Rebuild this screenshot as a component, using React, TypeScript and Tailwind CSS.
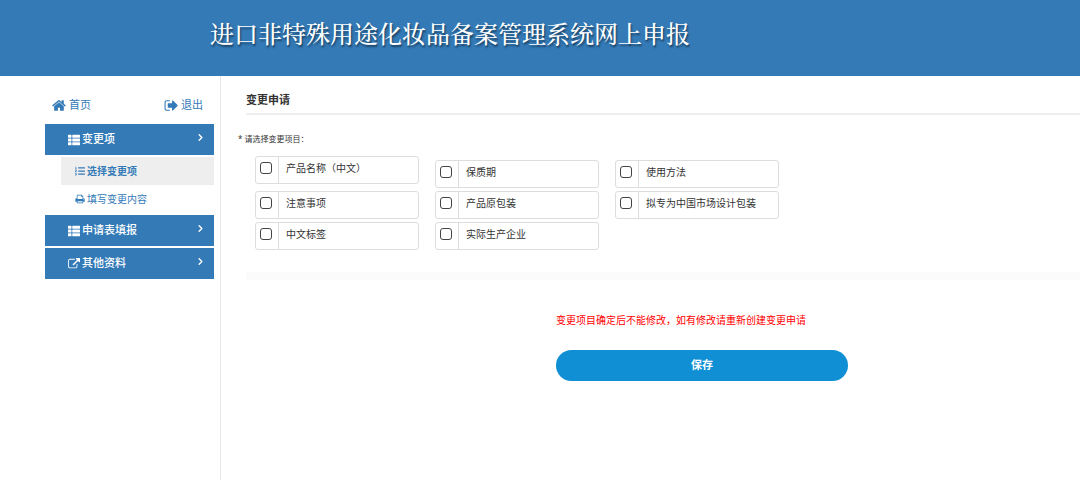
import { useState } from 'react'
import { ChevronRight } from 'lucide-react'
import { FaListOl, FaThList } from 'react-icons/fa'

const items = [
  '产品名称（中文）',
  '保质期',
  '使用方法',
  '注意事项',
  '产品原包装',
  '拟专为中国市场设计包装',
  '中文标签',
  '实际生产企业',
]

// Font Awesome 4 outlines, which differ from the v5 set in react-icons.
const paths = {
  home: 'M1408 992v480q0 26-19 45t-45 19h-384v-384h-256v384h-384q-26 0-45-19t-19-45v-480q0-1 .5-3t.5-3l575-474 575 474q1 2 1 6zm223-69l-62 74q-8 9-21 11h-3q-13 0-21-7l-692-577-692 577q-12 8-24 7-13-2-21-11l-62-74q-8-10-7-23.5t11-21.5l719-599q32-26 76-26t76 26l244 204v-195q0-14 9-23t23-9h192q14 0 23 9t9 23v408l219 182q10 8 11 21.5t-7 23.5z',
  signOut:
    'M704 1440q0 4 1 20t.5 26.5-3 23.5-10 19.5-20.5 6.5h-320q-119 0-203.5-84.5t-84.5-203.5v-704q0-119 84.5-203.5t203.5-84.5h320q13 0 22.5 9.5t9.5 22.5q0 4 1 20t.5 26.5-3 23.5-10 19.5-20.5 6.5h-320q-66 0-113 47t-47 113v704q0 66 47 113t113 47h312l11.5 1 11.5 3 8 5.5 7 9 2 13.5zm928-544q0 26-19 45l-544 544q-19 19-45 19t-45-19-19-45v-288h-448q-26 0-45-19t-19-45v-384q0-26 19-45t45-19h448v-288q0-26 19-45t45-19 45 19l544 544q19 19 19 45z',
  print:
    'M448 1536h896v-256h-896v256zm0-640h896v-384h-160q-40 0-68-28t-28-68v-160h-640v640zm1152 64q0-26-19-45t-45-19-45 19-19 45 19 45 45 19 45-19 19-45zm128 0v416q0 13-9.5 22.5t-22.5 9.5h-224v160q0 40-28 68t-68 28h-960q-40 0-68-28t-28-68v-160h-224q-13 0-22.5-9.5t-9.5-22.5v-416q0-79 56.5-135.5t135.5-56.5h64v-544q0-40 28-68t68-28h672q40 0 88 20t76 48l152 152q28 28 48 76t20 88v256h64q79 0 135.5 56.5t56.5 135.5z',
  external:
    'M1408 928v320q0 119-84.5 203.5t-203.5 84.5h-832q-119 0-203.5-84.5t-84.5-203.5v-832q0-119 84.5-203.5t203.5-84.5h704q14 0 23 9t9 23v64q0 14-9 23t-23 9h-704q-66 0-113 47t-47 113v832q0 66 47 113t113 47h832q66 0 113-47t47-113v-320q0-14 9-23t23-9h64q14 0 23 9t9 23zm384-864v512q0 26-19 45t-45 19-45-19l-176-176-652 652q-10 10-23 10t-23-10l-114-114q-10-10-10-23t10-23l652-652-176-176q-19-19-19-45t19-45 45-19h512q26 0 45 19t19 45z',
}

function Icon({ name, size }: { name: keyof typeof paths; size: number }) {
  return (
    <svg width={size} height={size} viewBox="0 0 1792 1792" fill="currentColor" aria-hidden="true">
      <path d={paths[name]} />
    </svg>
  )
}

function MenuHeading({ icon, text }: { icon: React.ReactNode; text: string }) {
  return (
    <button
      type="button"
      className="flex h-[31px] w-full items-center gap-[2px] bg-[#337ab7] pr-2 pl-[23px] text-[11px] font-medium text-white"
    >
      {icon}
      <span>{text}</span>
      <ChevronRight size={11} strokeWidth={3} className="mb-1 ml-auto" />
    </button>
  )
}

function Sidebar() {
  return (
    <aside className="w-[221px] shrink-0 border-r border-[#e8e8e8] pt-5 pr-[6px] pl-[45px]">
      <div className="flex h-[18px] items-center justify-between pr-[11px] pl-[7px] text-[11px] text-[#337ab7]">
        <a href="#home" className="flex items-center gap-[2px]">
          <Icon name="home" size={15} />
          首页
        </a>
        <a href="#logout" className="flex items-center gap-[2px]">
          <Icon name="signOut" size={15} />
          退出
        </a>
      </div>

      <nav className="mt-[10px] flex flex-col gap-[2px]">
        <MenuHeading icon={<FaThList size={12} />} text="变更项" />
        <div className="pl-4 text-[10px] text-[#337ab7]">
          <a href="#select" className="flex h-7 items-center gap-[2px] bg-[#eee] pl-[14px] font-bold">
            <FaListOl size={10} />
            选择变更项
          </a>
          <a href="#content" className="flex h-7 items-center gap-[2px] pl-[14px]">
            <Icon name="print" size={10} />
            填写变更内容
          </a>
        </div>
        <MenuHeading icon={<FaThList size={12} />} text="申请表填报" />
        <MenuHeading icon={<Icon name="external" size={12} />} text="其他资料" />
      </nav>
    </aside>
  )
}

export default function App() {
  const [checked, setChecked] = useState<string[]>([])

  const toggle = (name: string) =>
    setChecked(prev => (prev.includes(name) ? prev.filter(n => n !== name) : [...prev, name]))

  return (
    <div className="flex min-h-screen flex-col bg-white font-['Noto_Sans','Noto_Sans_CJK_SC',sans-serif] text-[#333]">
      <header className="h-[76px] bg-[#337ab7] pt-[15px] pl-[210px]">
        <h1 className="font-['Noto_Serif_CJK_SC','Noto_Sans_CJK_SC',serif] text-[24px] leading-9 font-medium text-white [text-shadow:1px_2px_2px_rgba(0,0,0,0.5)]">
          进口非特殊用途化妆品备案管理系统网上申报
        </h1>
      </header>

      <div className="flex flex-1">
        <Sidebar />

        <main className="min-w-0 flex-1 pt-px pl-[17px]">
          <h2 className="ml-2 h-[38px] border-b-2 border-[#eee] pt-[14px] text-[11px] leading-[18px] font-bold">
            变更申请
          </h2>

          <form onSubmit={e => e.preventDefault()}>
            <fieldset>
              <legend className="pt-[18px] text-[8px] leading-3">* 请选择变更项目：</legend>
              <div className="mt-[11px] ml-[17px] grid grid-cols-[repeat(3,164px)] gap-x-4 gap-y-[3px]">
                {items.map(name => (
                  <label
                    key={name}
                    className="flex h-7 rounded-[3px] border border-[#ddd] text-[10px] leading-[22px] nth-2:mt-1 nth-3:mt-1"
                  >
                    <span className="w-[23px] border-r border-[#ddd] pt-[5px] pl-[4px]">
                      <input
                        type="checkbox"
                        checked={checked.includes(name)}
                        onChange={() => toggle(name)}
                        className="block size-3 appearance-none rounded-[3px] border border-[#444] checked:bg-[#337ab7]"
                      />
                    </span>
                    <span className="pl-[7px]">{name}</span>
                  </label>
                ))}
              </div>
            </fieldset>

            <div className="mt-[22px] ml-2 h-2 bg-[#fbfbfb]" />

            <div className="mt-8 ml-[318px] max-w-[292px]">
              <p className="text-[10px] leading-4 text-[#f00]">变更项目确定后不能修改，如有修改请重新创建变更申请</p>
              <button
                type="submit"
                className="mt-[22px] block h-[31px] w-full rounded-full bg-[#108fd5] text-[11px] font-bold text-white"
              >
                保存
              </button>
            </div>
          </form>
        </main>
      </div>
    </div>
  )
}
